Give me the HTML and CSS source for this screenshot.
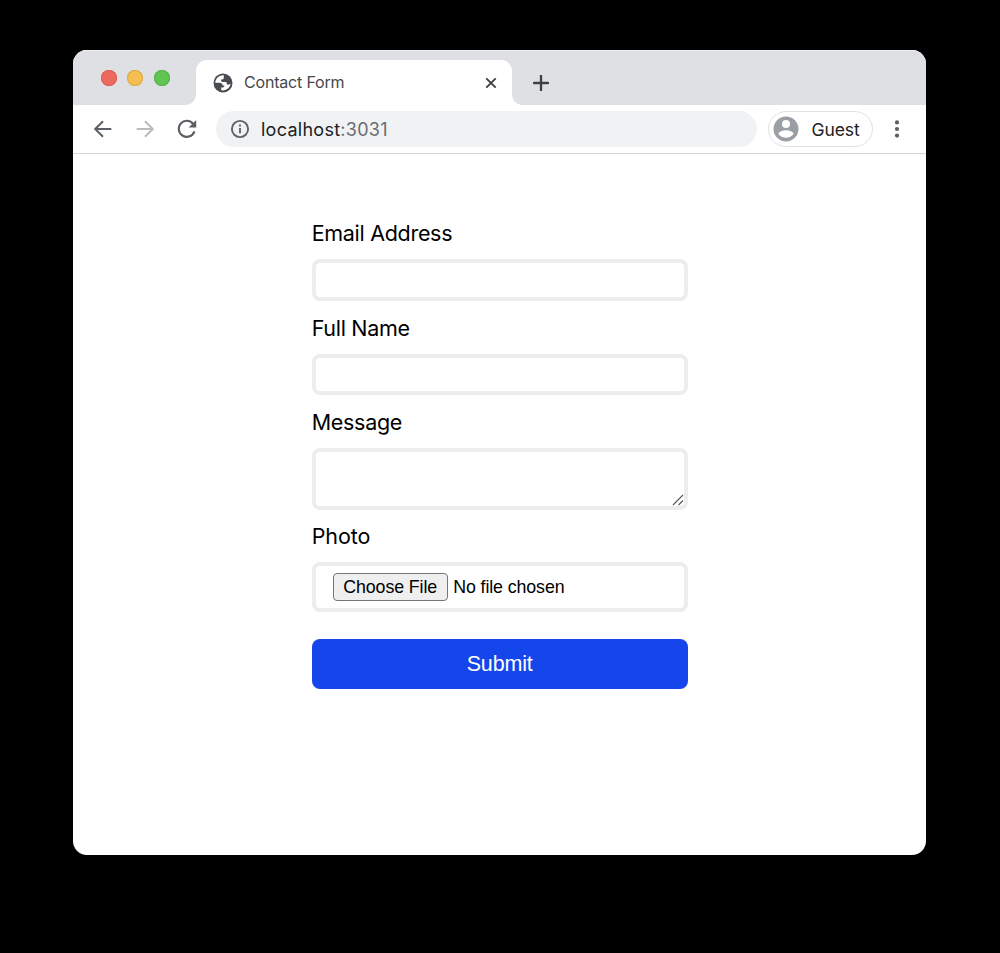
FILE: index.html
```html
<!DOCTYPE html>
<html lang="en">
<head>
<meta charset="utf-8">
<title>Contact Form</title>
<link rel="stylesheet" href="styles.css">
</head>
<body>
<div class="window">
  <header class="tabstrip">
    <div class="lights"><i class="red"></i><i class="yellow"></i><i class="green"></i></div>
    <div class="tab">
      <svg class="globe" viewBox="0 0 20 20"><circle cx="10" cy="10" r="9.5" fill="#494c50"/><path fill="#fff" d="M11 2.4C6.3 2 2.5 5.4 2.3 9.7H6.6C8.6 9.7 9.7 10.8 9.7 12.4H11.4C11.4 14 10.2 14.6 8.2 14.6V17.3C12.8 18.2 17.1 15.1 17.6 10.6C16.7 11.7 15.5 12.1 14.3 11.4C13.6 10.9 13.4 10 13.4 9.1H10.5C8.8 9.1 7.9 8.3 7.9 6.5H9.4C10.4 6.5 10.7 6 10.7 5.1V4.4Z"/></svg>
      <span class="title">Contact Form</span>
      <svg class="close" viewBox="0 0 12 12"><path d="M1.3 1.3 10.7 10.7M10.7 1.3 1.3 10.7"/></svg>
    </div>
    <svg class="plus" viewBox="0 0 16 16"><path d="M8 .9V15.1M.9 8H15.1"/></svg>
  </header>
  <nav class="toolbar">
    <svg class="nav back" viewBox="0 0 20 20"><path d="M18.3 10H2.5M10 2.2 2.2 10 10 17.8"/></svg>
    <svg class="nav forward" viewBox="0 0 20 20"><path d="M1.7 10H17.5M10 2.2 17.8 10 10 17.8"/></svg>
    <svg class="nav reload" viewBox="0 0 20 20"><path d="M16.2 5A8 8 0 1 0 17.4 12.3"/><path class="head" d="M19.2 1V8.5H11.7Z"/></svg>
    <div class="address">
      <svg class="info" viewBox="0 0 20 20"><circle cx="10" cy="10" r="8.1"/><path d="M10 9V14.2M10 5.5V7.4"/></svg>
      <span class="url">localhost<span class="port">:3031</span></span>
    </div>
    <div class="guest">
      <svg class="avatar" viewBox="0 0 26 26"><circle cx="13" cy="13" r="12.5" fill="#999fa5"/><circle cx="13" cy="8.1" r="4" fill="#fff"/><path fill="#fff" d="M5.5 18C5.5 15.6 10.2 14.3 13 14.3S20.5 15.6 20.5 18C18.9 20.4 16.2 21.8 13 21.8S7.1 20.4 5.5 18Z"/></svg>
      <span>Guest</span>
    </div>
    <svg class="more" viewBox="0 0 6 18"><circle cx="3" cy="2.4" r="2.1"/><circle cx="3" cy="9" r="2.1"/><circle cx="3" cy="15.6" r="2.1"/></svg>
  </nav>
  <main>
    <form class="form">
      <label class="label" for="email">Email Address</label>
      <input class="field email" id="email" type="email">
      <label class="label" for="name">Full Name</label>
      <input class="field name" id="name" type="text">
      <label class="label" for="message">Message</label>
      <div class="message-box">
        <textarea class="field message" id="message"></textarea>
        <svg class="grip" viewBox="0 0 12 12"><path d="M1 11 11 1M6.5 11 11 6.5"/></svg>
      </div>
      <span class="label photo">Photo</span>
      <div class="field file"><button class="choose" type="button">Choose File</button><span class="filename">No file chosen</span></div>
      <button class="submit" type="button">Submit</button>
    </form>
  </main>
</div>
</body>
</html>
```
FILE: styles.css
```css
* { box-sizing: border-box; }
body { margin: 0; height: 953px; overflow: hidden; background: #000; padding: 49.5px 0 0 73.4px; font-family: Inter, "Liberation Sans", sans-serif; }
svg { display: block; flex: none; fill: none; }
.window { width: 852.6px; height: 805.5px; border-radius: 14px; background: #fff; overflow: hidden; }
.tabstrip { height: 55.5px; background: #dee0e4; display: flex; padding-left: 27.6px; box-shadow: inset 0 1px #eceef0; }
.lights { display: flex; gap: 10.5px; padding-top: 20.5px; width: 95px; }
.lights i { width: 16px; height: 16px; border-radius: 50%; }
.red { background: #ec6a5e; box-shadow: inset 0 0 0 1px #dc5f55; }
.yellow { background: #f4be50; box-shadow: inset 0 0 0 1px #dca947; }
.green { background: #61c554; box-shadow: inset 0 0 0 1px #55b14a; }
.tab { position: relative; width: 316.4px; height: 45px; margin-top: 10.5px; background: #fff; border-radius: 11px 11px 0 0; display: flex; align-items: center; padding: 0 15.5px 0 16.7px; }
.tab::before, .tab::after { content: ""; position: absolute; bottom: 0; width: 10px; height: 10px; }
.tab::before { left: -10px; background: radial-gradient(circle at 0 0, transparent 9.5px, #fff 10px); }
.tab::after { right: -10px; background: radial-gradient(circle at 100% 0, transparent 9.5px, #fff 10px); }
.globe { width: 20px; height: 20px; }
.title { margin: 0 0 1px 11.3px; font-size: 16px; color: #45484c; letter-spacing: -.18px; }
.close { width: 12px; height: 12px; margin-left: auto; stroke: #3c4043; stroke-width: 1.9; }
.plus { width: 16px; height: 16px; margin: 25px 0 0 21px; stroke: #3c4043; stroke-width: 2.3; stroke-linecap: round; }
.toolbar { height: 49px; border-bottom: 1px solid #d5d6d8; display: flex; align-items: center; padding-left: 19.6px; }
.nav { width: 20px; height: 20px; stroke: #5b5e63; stroke-width: 2; }
.forward { margin-left: 22px; stroke: #b9bbbd; }
.reload { margin-left: 22px; stroke-width: 2.1; }
.reload .head { fill: #5b5e63; stroke: none; }
.address { width: 541px; height: 36px; border-radius: 18px; background: #f0f2f4; margin-left: 19px; display: flex; align-items: center; padding-left: 14px; }
.info { width: 20px; height: 20px; stroke: #5f6368; stroke-width: 1.9; }
.url { margin-left: 11px; font-size: 18px; color: #202124; letter-spacing: .27px; }
.port { color: #686c70; }
.guest { width: 105px; height: 36.5px; border: 1.5px solid #dfe1e3; border-radius: 19px; margin-left: 11px; display: flex; align-items: center; padding-left: 4px; font-size: 17.5px; letter-spacing: -.1px; color: #202124; }
.avatar { width: 26px; height: 26px; margin-right: 12.5px; }
.more { width: 6px; height: 18px; margin-left: 21px; fill: #5b5e63; }
.form { width: 376px; margin: 67px 0 0 238.3px; display: flex; flex-direction: column; }
.label { font-size: 21.5px; line-height: 24px; color: #000; height: 24px; letter-spacing: -.3px; }
.photo { letter-spacing: -.1px; }
.field { width: 376px; border: 4px solid #ededed; border-radius: 8px; background: #fff; outline: 0; margin: 14px 0 15px; padding: 0 17px; font: 18px "Liberation Sans", sans-serif; }
.email { height: 42px; }
.name { height: 41px; }
.message-box { position: relative; height: 90px; }
.message { display: block; height: 62px; resize: none; }
.grip { position: absolute; right: 4px; top: 60px; width: 12px; height: 12px; stroke: #555; stroke-width: 1.1; }
.file { height: 50px; display: flex; align-items: center; margin-bottom: 27px; }
.choose { width: 115px; height: 28px; border: 1px solid #767676; border-radius: 4px; background: #efefef; color: #000; font: 17.8px "Liberation Sans", sans-serif; letter-spacing: -.1px; padding: 0; white-space: nowrap; }
.filename { margin-left: 5.5px; font-size: 17.8px; letter-spacing: -.1px; }
.submit { height: 50px; border: 0; border-radius: 8px; background: #1546eb; color: #fff; font: 21.5px "Liberation Sans", sans-serif; letter-spacing: -.15px; padding: 0; }
```
